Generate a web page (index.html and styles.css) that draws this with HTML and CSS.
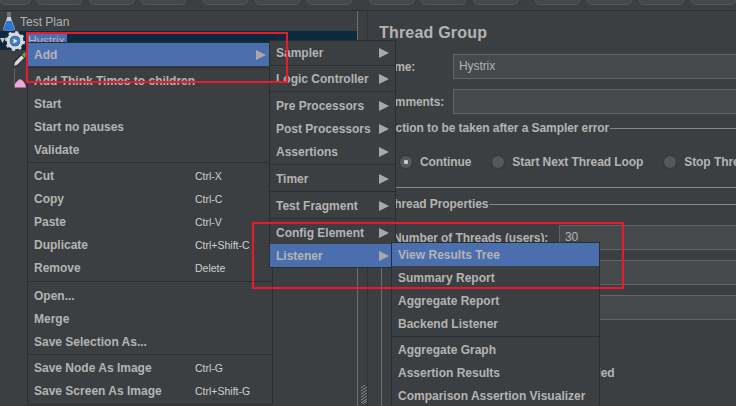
FILE: index.html
```html
<!DOCTYPE html>
<html>
<head>
  <title>Thread Group</title>
  <link rel="stylesheet" href="styles.css">
</head>
<body>
  <div class="toolbar">
    <span class="tool first"></span>
    <span class="tool"></span>
    <span class="tool"></span>
    <span class="tool"></span>
    <span class="tool gap"></span>
    <span class="tool"></span>
    <span class="tool"></span>
    <span class="tool gap"></span>
    <span class="tool"></span>
    <span class="tool"></span>
    <span class="tool gap"></span>
    <span class="tool"></span>
    <span class="tool"></span>
    <span class="tool"></span>
  </div>

  <div class="main">
    <div class="tree">
      <div class="tree-row">
        <svg width="12" height="19" viewBox="0 0 12 19">
          <path d="M4 0h4v6l3.700 10.500q.3 2-1.200 2h-9q-1.500 0-1.200-2l3.700-10.500z" fill="#c9ced6"/>
          <path d="M4 0h4v5h-4z" fill="#6d7278"/>
          <path d="M3.500 9h5l3 8q.2 1.500-1.200 1.500h-8.600q-1.400 0-1.200-1.500z" fill="#2a76d2"/>
        </svg>
        <span>Test Plan</span>
      </div>
      <div class="tree-row selected">
        <svg class="icon-arrow" width="5" height="5" viewBox="0 0 5 5"><path d="M0 0h5l-2.500 5z" fill="#c5c8cc"/></svg>
        <svg width="20" height="20" viewBox="0 0 20 20">
          <circle cx="10" cy="10" r="6.800" fill="none" stroke="#d5d8dc" stroke-width="3.200"/>
          <circle cx="10" cy="10" r="8.500" fill="none" stroke="#d5d8dc" stroke-width="3" stroke-dasharray="3 3.670"/>
          <circle cx="10" cy="10" r="5" fill="#3f7fc4"/>
          <path d="M8.500 7.500l4 2.500-4 2.500z" fill="#e8eef5"/>
        </svg>
        <span class="tree-label">Hystrix</span>
      </div>
      <div class="tree-row child">
        <svg width="13" height="15" viewBox="0 0 13 15">
          <path d="M0 15l1-6 7-7 4 4-7 7z" fill="#26282a"/>
          <path d="M1 14l1-4 6.500-6.500 2.500 2.500-6.500 6.500z" fill="#d8dadc"/>
          <path d="M9 3l2.500-3 1.500 2-1 4z" fill="#6f9a4e"/>
        </svg>
      </div>
      <div class="tree-row child">
        <svg width="14" height="19" viewBox="0 0 14 19">
          <path d="M1.500 0v19" stroke="#626567" fill="none"/>
          <path d="M2 18.500v-4l3-3 2-1.500 3 2 2 3 1 3.500z" fill="#f2a6dc"/>
        </svg>
      </div>
      <svg class="grip" width="6" height="19" viewBox="0 0 6 19">
        <path d="M0 3l4-3M0 6l6-4M0 9l6-4M0 12l6-4M0 15l6-4M0 18l6-4M2 19l4-3" stroke="#8a8d8f" fill="none"/>
      </svg>
    </div>

    <div class="panel">
      <h1>Thread Group</h1>
      <div class="field first">
        <label class="field-label">Name:</label>
        <div class="input">Hystrix</div>
      </div>
      <div class="field">
        <label class="field-label">Comments:</label>
        <div class="input"></div>
      </div>

      <div class="group">
        <div class="legend action"><span>Action to be taken after a Sampler error</span></div>
        <div class="radios">
          <span class="radio on"></span><span class="radio-text">Continue</span>
          <span class="radio"></span><span class="radio-text">Start Next Thread Loop</span>
          <span class="radio"></span><span class="radio-text">Stop Thread</span>
        </div>
      </div>

      <div class="group props">
        <div class="legend"><span>Thread Properties</span></div>
        <div class="prop first">
          <label class="prop-label">Number of Threads (users):</label>
          <div class="input">30</div>
        </div>
        <div class="prop">
          <label class="prop-label"></label>
          <div class="input"></div>
        </div>
        <div class="prop">
          <label class="prop-label"></label>
          <div class="input"></div>
        </div>
        <div class="delay">needed</div>
      </div>
    </div>
  </div>

  <div class="menu menu-main">
    <div class="item active"><span>Add</span><i class="arrow"></i></div>
    <div class="sep"></div>
    <div class="item"><span>Add Think Times to children</span></div>
    <div class="item"><span>Start</span></div>
    <div class="item"><span>Start no pauses</span></div>
    <div class="item"><span>Validate</span></div>
    <div class="sep"></div>
    <div class="item"><span>Cut</span><em>Ctrl-X</em></div>
    <div class="item"><span>Copy</span><em>Ctrl-C</em></div>
    <div class="item"><span>Paste</span><em>Ctrl-V</em></div>
    <div class="item"><span>Duplicate</span><em>Ctrl+Shift-C</em></div>
    <div class="item"><span>Remove</span><em>Delete</em></div>
    <div class="sep wide"></div>
    <div class="item"><span>Open...</span></div>
    <div class="item"><span>Merge</span></div>
    <div class="item"><span>Save Selection As...</span></div>
    <div class="sep"></div>
    <div class="item"><span>Save Node As Image</span><em>Ctrl-G</em></div>
    <div class="item"><span>Save Screen As Image</span><em>Ctrl+Shift-G</em></div>
  </div>

  <div class="menu menu-add">
    <div class="item"><span>Sampler</span><i class="arrow"></i></div>
    <div class="sep"></div>
    <div class="item"><span>Logic Controller</span><i class="arrow"></i></div>
    <div class="sep mid"></div>
    <div class="item"><span>Pre Processors</span><i class="arrow"></i></div>
    <div class="item"><span>Post Processors</span><i class="arrow"></i></div>
    <div class="item"><span>Assertions</span><i class="arrow"></i></div>
    <div class="sep mid"></div>
    <div class="item"><span>Timer</span><i class="arrow"></i></div>
    <div class="sep mid"></div>
    <div class="item"><span>Test Fragment</span><i class="arrow"></i></div>
    <div class="sep mid"></div>
    <div class="item"><span>Config Element</span><i class="arrow"></i></div>
    <div class="item active"><span>Listener</span><i class="arrow"></i></div>
  </div>

  <div class="menu menu-listener">
    <div class="item active"><span>View Results Tree</span></div>
    <div class="item"><span>Summary Report</span></div>
    <div class="item"><span>Aggregate Report</span></div>
    <div class="item"><span>Backend Listener</span></div>
    <div class="sep"></div>
    <div class="item"><span>Aggregate Graph</span></div>
    <div class="item"><span>Assertion Results</span></div>
    <div class="item"><span>Comparison Assertion Visualizer</span></div>
  </div>

  <div class="mark mark-add"></div>
  <div class="mark mark-listener"></div>
</body>
</html>
```

FILE: styles.css
```css
html, body {
  margin: 0;
  padding: 0;
  height: 100%;
  overflow: hidden;
}

body {
  position: relative;
  background-color: #3c3f41;
  color: #b4b4b4;
  font-family: "Liberation Sans", Arial, sans-serif;
  font-size: 12px;
  font-weight: bold;
}

/* Toolbar, only the bottom edge of the buttons is in view */
.toolbar {
  display: flex;
  gap: 7px;
  height: 10px;
  border-bottom: 1px solid #2b2d2e;
}

.tool {
  flex: none;
  width: 45px;
  height: 5px;
  box-sizing: border-box;
  background-color: #45484a;
  border: 1px solid #55585a;
  border-top: none;
  border-radius: 0 0 5px 5px;
}

.tool.first {
  width: 30px;
}

.tool.gap {
  margin-left: 10px;
}

.main {
  display: flex;
  height: 395px;
}

/* Tree */
.tree {
  position: relative;
  flex: none;
  width: 358px;
  height: 100%;
  padding-top: 1px;
  box-sizing: border-box;
  border-right: 1px solid #6b6e70;
  font-weight: normal;
}

.tree-row {
  display: flex;
  align-items: center;
  gap: 5px;
  height: 19px;
  padding-left: 3px;
}

.tree-row.selected {
  padding-left: 0;
  gap: 0;
  background-color: #0d293e;
}

.tree-row.child {
  padding-left: 13px;
}

.tree-label {
  margin-left: 2px;
  padding: 0 1px;
  width: 38px;
  background-color: #4b6eaf;
}

.grip {
  position: absolute;
  left: 361px;
  bottom: 2px;
}

/* Right side */
.panel {
  flex: 1;
  min-width: 0;
  margin-left: 9px;
  padding: 11px 0 0 11px;
  border-left: 1px solid #2f3133;
  letter-spacing: -0.08px;
}

h1 {
  margin: 0 0 -1px;
  font-size: 16px;
  line-height: 22px;
  letter-spacing: 0.2px;
}

.field {
  display: flex;
  align-items: center;
  margin-top: 10px;
}

.field.first {
  margin-top: 11px;
}

.field-label {
  flex: none;
  width: 74px;
}

.input {
  flex: 1;
  height: 25px;
  box-sizing: border-box;
  padding-left: 5px;
  line-height: 23px;
  background-color: #45494a;
  border: 1px solid #646464;
  border-right: none;
  font-weight: normal;
}

.group {
  margin-left: 2px;
  border-left: 1px solid #6b6e70;
}

.legend {
  display: flex;
  align-items: center;
  height: 14px;
  margin-top: 9px;
  padding-left: 5px;
}

.legend.action {
  margin-top: 7px;
}

.legend::after {
  content: "";
  flex: 1;
  height: 1px;
  margin-left: 1px;
  background-color: #85888a;
}

.radios {
  display: flex;
  align-items: center;
  height: 50px;
  padding: 2px 0 0 17px;
  border-bottom: 1px solid #85888a;
  white-space: nowrap;
  overflow: hidden;
}

.radio {
  flex: none;
  width: 14px;
  height: 14px;
  margin-right: 7px;
  box-sizing: border-box;
  border-radius: 50%;
  background-color: #55585a;
  border: 1px solid #333537;
}

.radio.on {
  background: radial-gradient(circle, #c8c8c8 0 2px, #55585a 2.5px);
}

.radio-text {
  margin-right: 20px;
}

.props {
  height: 220px;
}

.prop {
  display: flex;
  align-items: center;
  margin-top: 10px;
  padding-left: 11px;
}

.prop.first {
  margin-top: 14px;
}

.prop-label {
  flex: none;
  width: 166px;
}

.delay {
  margin-top: 46px;
  padding-left: 191px;
}

/* Popup menus */
.menu {
  position: absolute;
  box-sizing: border-box;
  background-color: #3c3f41;
  border: 1px solid #2b2d2e;
}

.menu-main {
  left: 27px;
  top: 42px;
  width: 246px;
  padding-bottom: 2px;
  z-index: 2;
}

.menu-add {
  left: 269px;
  top: 40px;
  width: 127px;
  z-index: 3;
}

.menu-listener {
  left: 391px;
  top: 242px;
  width: 209px;
  z-index: 4;
}

.item {
  position: relative;
  display: flex;
  align-items: center;
  height: 23px;
  padding-left: 6px;
  white-space: nowrap;
}

.item.active {
  background-color: #4b6eaf;
}

.item em {
  position: absolute;
  left: 167px;
  font-style: normal;
  font-weight: normal;
  font-size: 10.5px;
  color: #d0d0d0;
}

.arrow {
  position: absolute;
  right: 6px;
  width: 0;
  height: 0;
  border-left: 10px solid #a8a8a8;
  border-top: 5.5px solid transparent;
  border-bottom: 5.5px solid transparent;
}

.sep {
  height: 3px;
  box-sizing: border-box;
  padding-top: 1px;
}

.sep::before {
  content: "";
  display: block;
  height: 1px;
  background-color: #2b2d2e;
}

.sep.mid {
  height: 4px;
}

.sep.wide {
  height: 5px;
  padding-top: 2px;
}

/* Red annotation boxes drawn over the screenshot */
.mark {
  position: absolute;
  box-sizing: border-box;
  border: 2px solid #e81a2b;
  z-index: 5;
}

.mark-add {
  left: 26px;
  top: 32px;
  width: 262px;
  height: 51px;
}

.mark-listener {
  left: 252px;
  top: 222px;
  width: 372px;
  height: 67px;
}
```
